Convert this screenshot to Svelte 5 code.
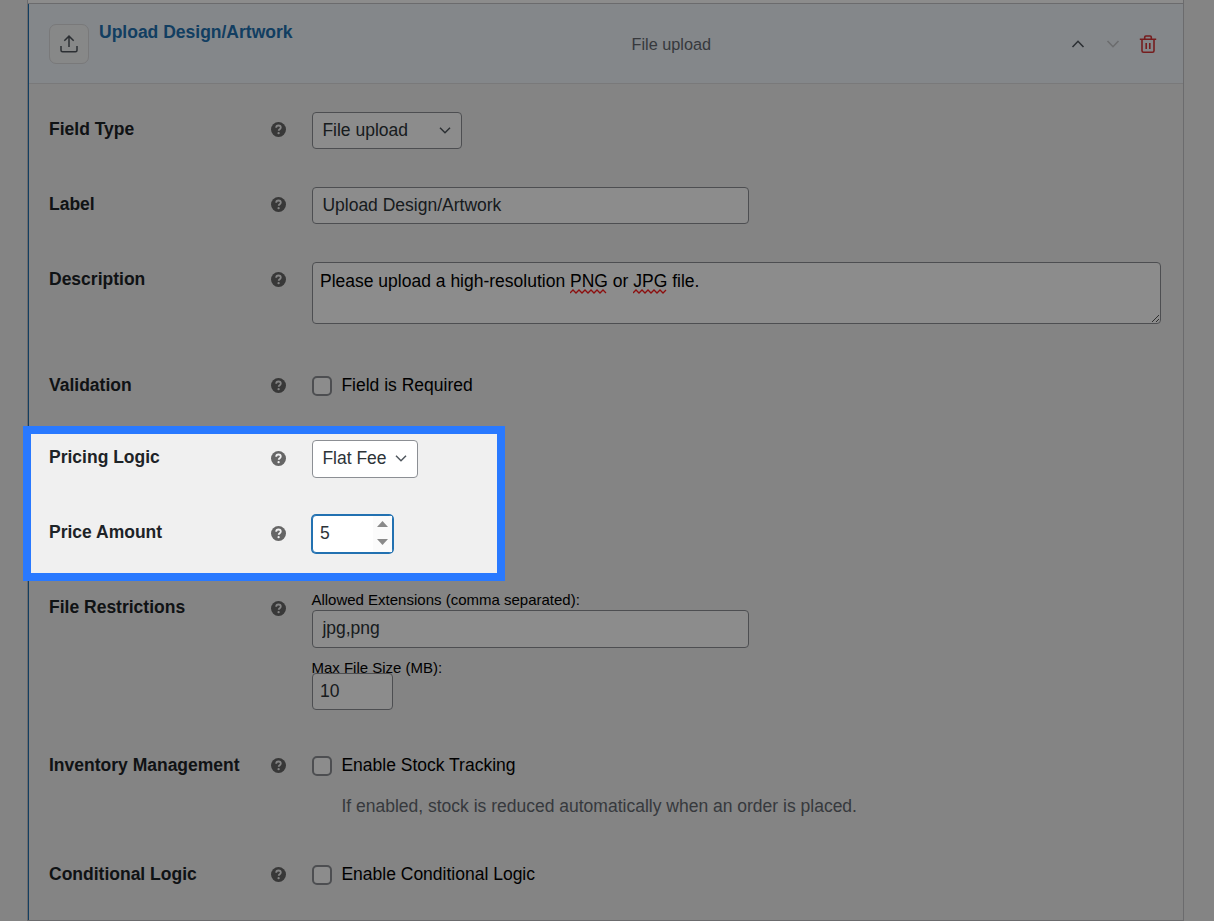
<script>
  const extensions = 'jpg,png';
  let label = 'Upload Design/Artwork';
  let fieldType = 'File upload';
  let pricing = 'Flat Fee';
  let amount = '5';
  let maxSize = '10';

  const rows = [
    { id: 'type', title: 'Field Type', height: 75 },
    { id: 'label', title: 'Label', height: 75 },
    { id: 'description', title: 'Description', height: 106 },
    { id: 'required', title: 'Validation', height: 72, check: 'Field is Required' },
    { id: 'pricing', title: 'Pricing Logic', height: 75, low: true },
    { id: 'amount', title: 'Price Amount', height: 75, low: true },
    { id: 'files', title: 'File Restrictions', height: 158, low: true },
    {
      id: 'stock',
      title: 'Inventory Management',
      height: 109,
      check: 'Enable Stock Tracking',
      note: 'If enabled, stock is reduced automatically when an order is placed.'
    },
    { id: 'logic', title: 'Conditional Logic', height: 82, check: 'Enable Conditional Logic' }
  ];

  // zigzag under words the spell checker does not know
  function zigzag(width) {
    let d = 'M0 4';
    for (let x = 3, up = true; x <= width; x += 3, up = !up) {
      d += `L${x} ${up ? 1 : 4}`;
    }
    return d;
  }
</script>

<div class="page">
  <div class="panel">
    <div class="strip"></div>
    <section class="field">
      <header>
        <div class="icon-box">
          <svg width="20" height="20" viewBox="0 0 20 20" fill="none" stroke="#50575e" stroke-width="1.5">
            <path d="M10 13V2.3M5.3 6.8L10 2.1l4.7 4.7M2 12v4.2c0 1 .5 1.5 1.5 1.5h13c1 0 1.5-.5 1.5-1.5V12" />
          </svg>
        </div>
        <strong>{label}</strong>
        <span class="kind">File upload</span>
        <div class="actions">
          <button aria-label="Move up">
            <svg width="14" height="14" viewBox="0 0 14 14" fill="none" stroke="#50575e" stroke-width="1.6"><path d="M1.5 10L7 4.3l5.5 5.7" /></svg>
          </button>
          <button aria-label="Move down" disabled>
            <svg width="14" height="14" viewBox="0 0 14 14" fill="none" stroke="#c3c4c7" stroke-width="1.6"><path d="M1.5 4L7 9.7 12.5 4" /></svg>
          </button>
          <button aria-label="Delete">
            <svg width="18" height="20" viewBox="0 0 18 20" fill="none" stroke="#d63638" stroke-width="1.6">
              <path d="M.8 5.3h16.400M5.700 5.300V3.200c0-.8.500-1.200 1.200-1.200h4.200c.7 0 1.200.4 1.200 1.200v2.100M3 5.300v11.500c0 .9.600 1.500 1.500 1.500h9c.9 0 1.500-.6 1.500-1.500V5.300M7.200 9v6M10.800 9v6" />
            </svg>
          </button>
        </div>
      </header>

      {#each rows as row}
        <div class="row" style="height: {row.height}px">
          <div class="title">{row.title}</div>
          <svg class="help" class:low={row.low} width="15" height="15" viewBox="0 0 15 15">
            <circle cx="7.5" cy="7.5" r="7.5" fill="#666" />
            <path d="M5.200 5.800C5.200 4.300 6.100 3.500 7.500 3.500s2.300.8 2.300 2c0 1.700-2.100 1.700-2.100 3.300" fill="none" stroke="#f0f0f1" stroke-width="1.800" />
            <circle cx="7.600" cy="11.200" r="1.150" fill="#f0f0f1" />
          </svg>
          <div class="control">
            {#if row.check}
              <label class="check"><input type="checkbox" />{row.check}</label>
              {#if row.note}<p class="note">{row.note}</p>{/if}
            {:else if row.id === 'type' || row.id === 'pricing'}
              <div class="select" class:wide={row.id === 'type'}>
                <span>{row.id === 'type' ? fieldType : pricing}</span>
                <svg width="12" height="8" viewBox="0 0 12 8" fill="none" stroke="#50575e" stroke-width="1.5"><path d="M1 1.700l5 5 5-5" /></svg>
              </div>
            {:else if row.id === 'label'}
              <input class="text" type="text" bind:value={label} />
            {:else if row.id === 'description'}
              <div class="area" role="textbox" tabindex="0">
                Please upload a high-resolution
                <span class="misspelt">PNG<svg width="38" height="5"><path d={zigzag(38)} /></svg></span>
                or
                <span class="misspelt">JPG<svg width="34" height="5"><path d={zigzag(34)} /></svg></span>
                file.
                <svg class="grip" width="9" height="9" viewBox="0 0 9 9" stroke="#555" stroke-width="1"><path d="M1 8l7-7M5 8l3-3" /></svg>
              </div>
            {:else if row.id === 'amount'}
              <div class="number focused">
                <span>{amount}</span>
                <div class="spin">
                  <svg width="11" height="6" viewBox="0 0 11 6"><path d="M0 6L5.500 0 11 6z" fill="#8a8a8a" /></svg>
                  <svg width="11" height="6" viewBox="0 0 11 6"><path d="M0 0l5.500 6L11 0z" fill="#8a8a8a" /></svg>
                </div>
              </div>
            {:else}
              <div class="small">Allowed Extensions (comma separated):</div>
              <input class="text tall" type="text" value={extensions} />
              <div class="small second">Max File Size (MB):</div>
              <div class="number"><span>{maxSize}</span></div>
            {/if}
          </div>
        </div>
      {/each}
    </section>
  </div>
  <div class="spotlight"></div>
</div>

<style>
  :global(body) {
    margin: 0;
    overflow: hidden;
  }

  .page {
    position: relative;
    width: 1214px;
    height: 921px;
    overflow: hidden;
    box-sizing: border-box;
    padding-left: 27px;
    background: #f0f0f1;
    font: 17.5px/24px "Liberation Sans", Arial, sans-serif;
    color: #000;
  }

  .page * {
    box-sizing: border-box;
  }

  .panel {
    width: 1157px;
    height: 921px;
    border: solid #c3c4c7;
    border-width: 0 1px 1px;
    background: #f0f0f0;
  }

  .strip {
    height: 4px;
    background: #fff;
    border-bottom: 1px solid #c3c4c7;
  }

  .field {
    height: 916px;
    border-left: 1px solid #2271b1;
  }

  header {
    display: grid;
    grid-template-columns: 40px 532.5px 1fr auto;
    column-gap: 10px;
    height: 80px;
    margin-bottom: 9px;
    padding: 20px 26px 0 20px;
    background: #f0f6fc;
    border-bottom: 1px solid #dcdcde;
  }

  .icon-box {
    display: flex;
    align-items: center;
    justify-content: center;
    width: 40px;
    height: 40px;
    background: #f6f7f7;
    border: 1px solid #dcdcde;
    border-radius: 7px;
  }

  header strong {
    margin-top: -4px;
    color: #2271b1;
  }

  .kind {
    margin-left: -10px;
    line-height: 40px;
    font-size: 16.25px;
    color: #646970;
  }

  .actions {
    display: flex;
    gap: 17px;
    height: 40px;
    align-items: center;
  }

  .actions button {
    display: flex;
    justify-content: center;
    width: 18px;
    padding: 0;
    border: 0;
    background: none;
  }

  .row {
    display: grid;
    grid-template-columns: 222px 41px 1fr;
    padding: 19px 22px 0 20px;
  }

  .title {
    padding-top: 5px;
    font-weight: bold;
    color: #1d2327;
  }

  .help {
    margin-top: 10px;
  }

  .help.low {
    margin-top: 11px;
  }

  .select,
  .text,
  .area,
  .number {
    background: #fff;
    border: 1px solid #8c8f94;
    border-radius: 4px;
    color: #2c3338;
  }

  .select {
    display: flex;
    align-items: center;
    justify-content: space-between;
    width: 106px;
    height: 38px;
    padding: 0 10px 2px 9.4px;
  }

  .select.wide {
    width: 150px;
    height: 37px;
  }

  .text {
    display: block;
    width: 437px;
    height: 37px;
    padding: 0 10px 1px 9.4px;
    font: inherit;
  }

  .text.tall {
    height: 38px;
    padding-bottom: 2px;
  }

  .area {
    position: relative;
    width: 849px;
    height: 62px;
    padding: 6px 7px;
    color: #000;
  }

  .misspelt {
    position: relative;
  }

  .misspelt svg {
    position: absolute;
    left: 0;
    bottom: -3px;
    fill: none;
    stroke: #ff1a1a;
    stroke-width: 1.3;
  }

  .grip {
    position: absolute;
    right: 0;
    bottom: 0;
  }

  .check {
    display: flex;
    align-items: center;
    gap: 9.4px;
    padding-top: 5px;
  }

  .check input {
    appearance: none;
    width: 20px;
    height: 20px;
    margin: 2px 0 0;
    border: 2px solid #8c8f94;
    border-radius: 5px;
    background: #fff;
  }

  .note {
    margin: 17px 0 0 29.4px;
    color: #646970;
  }

  .number {
    display: flex;
    justify-content: space-between;
    width: 81px;
    height: 37px;
    padding-left: 7px;
    line-height: 34px;
  }

  .focused {
    height: 38px;
    border-color: #2271b1;
    box-shadow: 0 0 0 1px #2271b1;
  }

  .spin {
    display: flex;
    flex-direction: column;
    justify-content: space-between;
    align-items: center;
    width: 19px;
    padding: 5px 3px 7px;
    background: #fbfbfb;
  }

  .small {
    height: 20px;
    margin-left: -0.6px;
    font-size: 15px;
    line-height: 20px;
  }

  .second {
    height: 15px;
    margin-top: 10px;
  }

  .spotlight {
    position: absolute;
    left: 23px;
    top: 426px;
    width: 482px;
    height: 155px;
    box-sizing: border-box;
    border: 8px solid #2979ff;
    box-shadow: 0 0 0 1300px rgba(0, 0, 0, 0.45);
    pointer-events: none;
  }
</style>
